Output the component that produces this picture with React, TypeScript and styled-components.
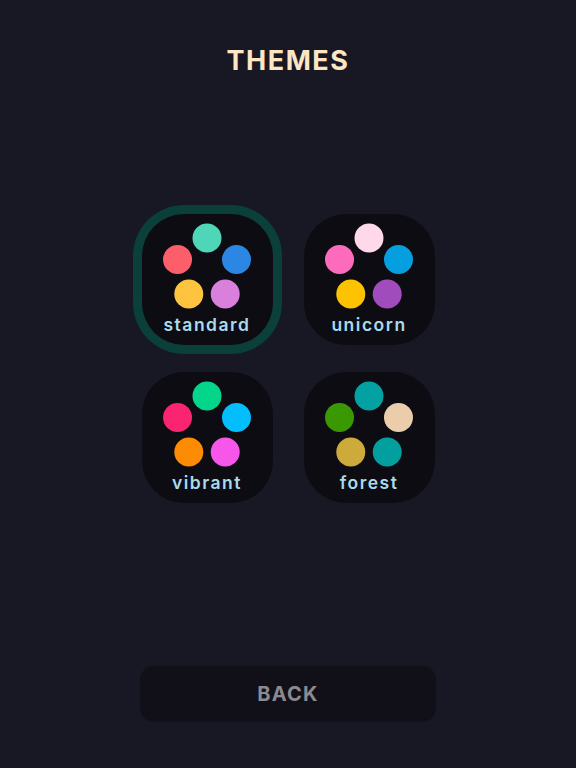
import styled, { createGlobalStyle, css } from "styled-components"

const GlobalStyle = createGlobalStyle`
    html, body {
        margin: 0;
        padding: 0;
        background: #181824;
    }
    * {
        box-sizing: border-box;
    }
`

const Page = styled.div`
    width: 576px;
    height: 768px;
    display: flex;
    flex-direction: column;
    align-items: center;
    background: #181824;
    font-family: Inter, "Noto Sans", sans-serif;
`

const Title = styled.h1`
    margin: 45px 0 0;
    font-size: 27px;
    line-height: 32px;
    font-weight: 700;
    letter-spacing: 1.5px;
    color: #fde6c3;
`

const Grid = styled.div`
    margin-top: 137px;
    display: grid;
    grid-template-columns: repeat(2, 131px);
    column-gap: 31px;
    row-gap: 27px;
`

const Tile = styled.button<{ $selected?: boolean }>`
    width: 131px;
    height: 131px;
    padding: 0;
    border: none;
    border-radius: 42px;
    background: #0d0c12;
    display: flex;
    flex-direction: column;
    align-items: center;
    cursor: pointer;
    font-family: inherit;
    ${(p) =>
        p.$selected &&
        css`
            box-shadow: 0 0 0 9px #0b3f3a;
        `}
`

const Dots = styled.svg`
    display: block;
    margin-top: 9px;
`

const Label = styled.span`
    margin-top: 1px;
    font-size: 17.5px;
    font-weight: 600;
    letter-spacing: 1.5px;
    color: #a9daee;
`

const BackButton = styled.button`
    margin-top: auto;
    margin-bottom: 46px;
    width: 296px;
    height: 56px;
    border: none;
    border-radius: 14px;
    background: #111019;
    color: #8a8a8f;
    font-family: inherit;
    font-size: 20px;
    font-weight: 700;
    letter-spacing: 1.2px;
    cursor: pointer;
`

type Theme = { name: string; colors: string[] }

// order: top, right, bottom-right, bottom-left, left
const themes: Theme[] = [
    { name: "standard", colors: ["#4fd6b8", "#2c86e3", "#d97fdc", "#fec33f", "#fd5f6a"] },
    { name: "unicorn", colors: ["#ffd8e9", "#059fe0", "#a14cbd", "#fdc300", "#fd6cbc"] },
    { name: "vibrant", colors: ["#03d68a", "#03bdfd", "#f656ea", "#fd8b03", "#fb2471"] },
    { name: "forest", colors: ["#03a1a1", "#ebcdab", "#039f9e", "#ccab3a", "#3a9903"] },
]

const ThemeDots = ({ colors }: { colors: string[] }) => {
    const cx = 65
    const cy = 46
    const r = 31
    return (
        <Dots width={131} height={90} viewBox="0 0 131 90">
            {colors.map((c, i) => {
                const a = (-90 + i * 72) * (Math.PI / 180)
                return <circle key={i} cx={cx + r * Math.cos(a)} cy={cy + r * Math.sin(a)} r={14.5} fill={c} />
            })}
        </Dots>
    )
}

export default function App() {
    return (
        <>
            <GlobalStyle />
            <Page>
                <Title>THEMES</Title>
                <Grid>
                    {themes.map((t, i) => (
                        <Tile key={t.name} $selected={i === 0}>
                            <ThemeDots colors={t.colors} />
                            <Label>{t.name}</Label>
                        </Tile>
                    ))}
                </Grid>
                <BackButton>BACK</BackButton>
            </Page>
        </>
    )
}
